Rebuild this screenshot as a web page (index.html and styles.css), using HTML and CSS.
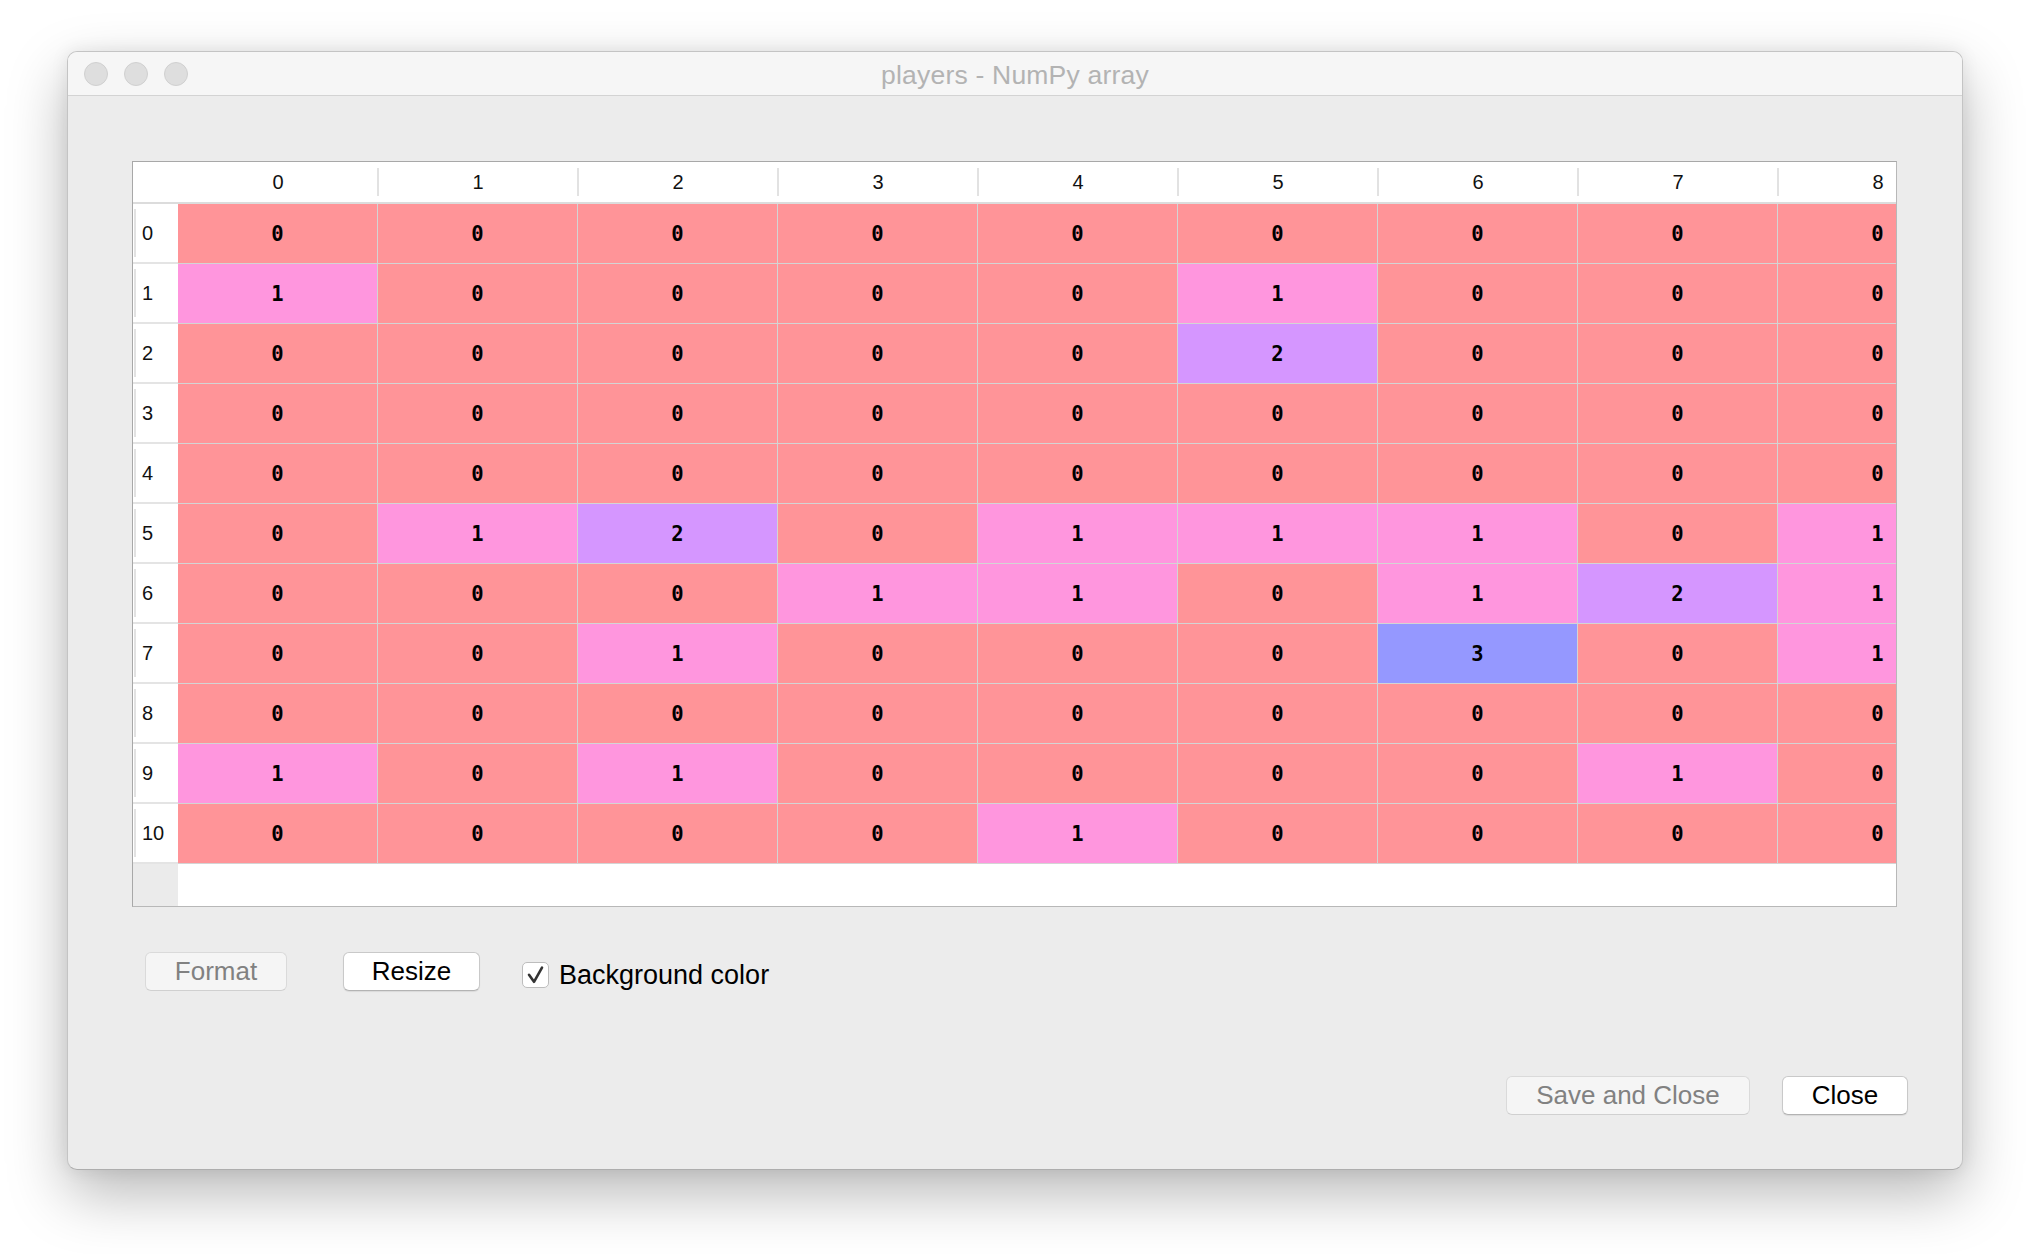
FILE: index.html
```html
<!DOCTYPE html>
<html>
<head>
<meta charset="utf-8">
<title>players - NumPy array</title>
<link rel="stylesheet" href="styles.css">
</head>
<body>
<div class="window">
  <div class="titlebar">
    <div class="lights"><span class="light"></span><span class="light"></span><span class="light"></span></div>
    <div class="title">players - NumPy array</div>
    <div></div>
  </div>
  <div class="content">
    <div class="table">
      <div class="hrow">
        <div class="corner"></div>
        <div class="hcell">0</div><div class="hcell">1</div><div class="hcell">2</div><div class="hcell">3</div><div class="hcell">4</div><div class="hcell">5</div><div class="hcell">6</div><div class="hcell">7</div><div class="hcell">8</div>
      </div>
      <div class="row"><div class="rh">0</div><div class="c v0">0</div><div class="c v0">0</div><div class="c v0">0</div><div class="c v0">0</div><div class="c v0">0</div><div class="c v0">0</div><div class="c v0">0</div><div class="c v0">0</div><div class="c v0">0</div></div>
      <div class="row"><div class="rh">1</div><div class="c v1">1</div><div class="c v0">0</div><div class="c v0">0</div><div class="c v0">0</div><div class="c v0">0</div><div class="c v1">1</div><div class="c v0">0</div><div class="c v0">0</div><div class="c v0">0</div></div>
      <div class="row"><div class="rh">2</div><div class="c v0">0</div><div class="c v0">0</div><div class="c v0">0</div><div class="c v0">0</div><div class="c v0">0</div><div class="c v2">2</div><div class="c v0">0</div><div class="c v0">0</div><div class="c v0">0</div></div>
      <div class="row"><div class="rh">3</div><div class="c v0">0</div><div class="c v0">0</div><div class="c v0">0</div><div class="c v0">0</div><div class="c v0">0</div><div class="c v0">0</div><div class="c v0">0</div><div class="c v0">0</div><div class="c v0">0</div></div>
      <div class="row"><div class="rh">4</div><div class="c v0">0</div><div class="c v0">0</div><div class="c v0">0</div><div class="c v0">0</div><div class="c v0">0</div><div class="c v0">0</div><div class="c v0">0</div><div class="c v0">0</div><div class="c v0">0</div></div>
      <div class="row"><div class="rh">5</div><div class="c v0">0</div><div class="c v1">1</div><div class="c v2">2</div><div class="c v0">0</div><div class="c v1">1</div><div class="c v1">1</div><div class="c v1">1</div><div class="c v0">0</div><div class="c v1">1</div></div>
      <div class="row"><div class="rh">6</div><div class="c v0">0</div><div class="c v0">0</div><div class="c v0">0</div><div class="c v1">1</div><div class="c v1">1</div><div class="c v0">0</div><div class="c v1">1</div><div class="c v2">2</div><div class="c v1">1</div></div>
      <div class="row"><div class="rh">7</div><div class="c v0">0</div><div class="c v0">0</div><div class="c v1">1</div><div class="c v0">0</div><div class="c v0">0</div><div class="c v0">0</div><div class="c v3">3</div><div class="c v0">0</div><div class="c v1">1</div></div>
      <div class="row"><div class="rh">8</div><div class="c v0">0</div><div class="c v0">0</div><div class="c v0">0</div><div class="c v0">0</div><div class="c v0">0</div><div class="c v0">0</div><div class="c v0">0</div><div class="c v0">0</div><div class="c v0">0</div></div>
      <div class="row"><div class="rh">9</div><div class="c v1">1</div><div class="c v0">0</div><div class="c v1">1</div><div class="c v0">0</div><div class="c v0">0</div><div class="c v0">0</div><div class="c v0">0</div><div class="c v1">1</div><div class="c v0">0</div></div>
      <div class="row"><div class="rh">10</div><div class="c v0">0</div><div class="c v0">0</div><div class="c v0">0</div><div class="c v0">0</div><div class="c v1">1</div><div class="c v0">0</div><div class="c v0">0</div><div class="c v0">0</div><div class="c v0">0</div></div>
      <div class="filler"><div class="filler-rh"></div><div class="filler-data"></div></div>
    </div>
    <div class="tools">
      <button class="btn disabled btn-format">Format</button>
      <button class="btn btn-resize">Resize</button>
      <label class="check">
        <span class="box"><svg width="27" height="26" viewBox="0 0 27 26"><polyline points="7,12.8 12,19.8 20,5.6" fill="none" stroke="#333" stroke-width="2.6" stroke-linecap="round" stroke-linejoin="round"/></svg></span>
        <span class="check-label">Background color</span>
      </label>
    </div>
    <div class="footer">
      <button class="btn disabled btn-save">Save and Close</button>
      <button class="btn btn-close">Close</button>
    </div>
  </div>
</div>
</body>
</html>
```
FILE: styles.css
```css
html, body {
  margin: 0;
  padding: 0;
  background: #ffffff;
}
body {
  padding: 51px 0 84px 67px;
  font-family: "Liberation Sans", Arial, sans-serif;
}
.window {
  width: 1896px;
  height: 1119px;
  box-sizing: border-box;
  border: 1px solid #c4c4c4;
  border-bottom-color: #adadad;
  border-radius: 10px;
  background: #ececec;
  overflow: hidden;
  box-shadow: 0 24px 60px rgba(0, 0, 0, 0.28), 0 0 18px rgba(0, 0, 0, 0.08);
  display: flex;
  flex-direction: column;
}
.titlebar {
  height: 43px;
  flex: none;
  background: #f6f6f6;
  border-bottom: 1px solid #d3d3d3;
  display: grid;
  grid-template-columns: 1fr auto 1fr;
  align-items: center;
}
.lights {
  display: flex;
  gap: 16px;
  padding-left: 16px;
  padding-top: 1px;
}
.light {
  width: 24px;
  height: 24px;
  box-sizing: border-box;
  border-radius: 50%;
  background: #dedede;
  border: 1px solid #d0d0d0;
}
.title {
  font-size: 26.5px;
  color: #b3b3b3;
  letter-spacing: 0.2px;
  padding-top: 3px;
}
.content {
  flex: 1;
  display: flex;
  flex-direction: column;
  padding: 65px 54px 0 64px;
}
.table {
  height: 746px;
  width: 1765px;
  box-sizing: border-box;
  border: 1px solid #a8a8a8;
  border-right-color: #b8b8b8;
  border-bottom-color: #b8b8b8;
  background: #ffffff;
  overflow: hidden;
  display: flex;
  flex-direction: column;
}
.hrow, .row {
  display: flex;
  flex: none;
}
.hrow {
  height: 42px;
  box-sizing: border-box;
  border-bottom: 2px solid #dcdcdc;
  background: #fff;
}
.corner {
  width: 45px;
  flex: none;
}
.hcell {
  width: 200px;
  flex: none;
  box-sizing: border-box;
  font-size: 20px;
  color: #111;
  display: flex;
  align-items: center;
  justify-content: center;
  position: relative;
}
.hcell::after {
  content: "";
  position: absolute;
  right: -1px;
  top: 6px;
  bottom: 6px;
  width: 2px;
  background: #e2e2e2;
}
.row {
  height: 60px;
}
.rh {
  width: 45px;
  flex: none;
  box-sizing: border-box;
  background: #fff;
  border-bottom: 2px solid #e4e4e4;
  padding-left: 9px;
  font-size: 20px;
  color: #111;
  display: flex;
  align-items: center;
  position: relative;
}
.rh::before {
  content: "";
  position: absolute;
  left: 1px;
  top: 5px;
  bottom: 5px;
  width: 2px;
  background: #e2e2e2;
}
.c {
  width: 200px;
  flex: none;
  box-sizing: border-box;
  border-right: 1px solid #d4d4d4;
  border-bottom: 1px solid #d4d4d4;
  display: flex;
  align-items: center;
  justify-content: center;
  font-family: "DejaVu Sans Mono", "Liberation Mono", monospace;
  font-weight: bold;
  font-size: 20.5px;
  color: #000;
}
.v0 { background: #ff9498; }
.v1 { background: #ff96de; }
.v2 { background: #d596ff; }
.v3 { background: #9598ff; }
.filler {
  flex: 1;
  display: flex;
}
.filler-rh {
  width: 45px;
  flex: none;
  background: #ebebeb;
}
.filler-data {
  flex: 1;
  background: #fff;
}
.tools {
  display: flex;
  align-items: center;
  margin-top: 45px;
  padding-left: 13px;
  height: 39px;
}
.btn {
  height: 39px;
  box-sizing: border-box;
  border-radius: 6px;
  font-family: "Liberation Sans", Arial, sans-serif;
  font-size: 26px;
  padding: 0;
  margin: 0;
  display: flex;
  align-items: center;
  justify-content: center;
  background: #ffffff;
  color: #000;
  border: 1px solid #c9c9c9;
  border-bottom-color: #b3b3b3;
  box-shadow: 0 1px 1px rgba(0, 0, 0, 0.08);
}
.btn.disabled {
  background: #f5f5f5;
  color: #818181;
  border-color: #dadada;
  border-bottom-color: #d0d0d0;
  box-shadow: none;
}
.btn-format { width: 142px; }
.btn-resize { width: 137px; margin-left: 56px; }
.check {
  display: flex;
  align-items: center;
  margin-left: 42px;
}
.box {
  width: 27px;
  height: 26px;
  box-sizing: border-box;
  border: 1px solid #bdbdbd;
  border-radius: 5px;
  background: #fff;
  display: block;
  position: relative;
  margin-top: 7px;
}
.box svg {
  position: absolute;
  left: -1px;
  top: -1px;
}
.check-label {
  margin-left: 10px;
  font-size: 27px;
  color: #000;
  margin-top: 8px;
}
.footer {
  display: flex;
  justify-content: flex-end;
  margin-top: 85px;
}
.btn-save { width: 244px; }
.btn-close { width: 126px; margin-left: 32px; }
```
